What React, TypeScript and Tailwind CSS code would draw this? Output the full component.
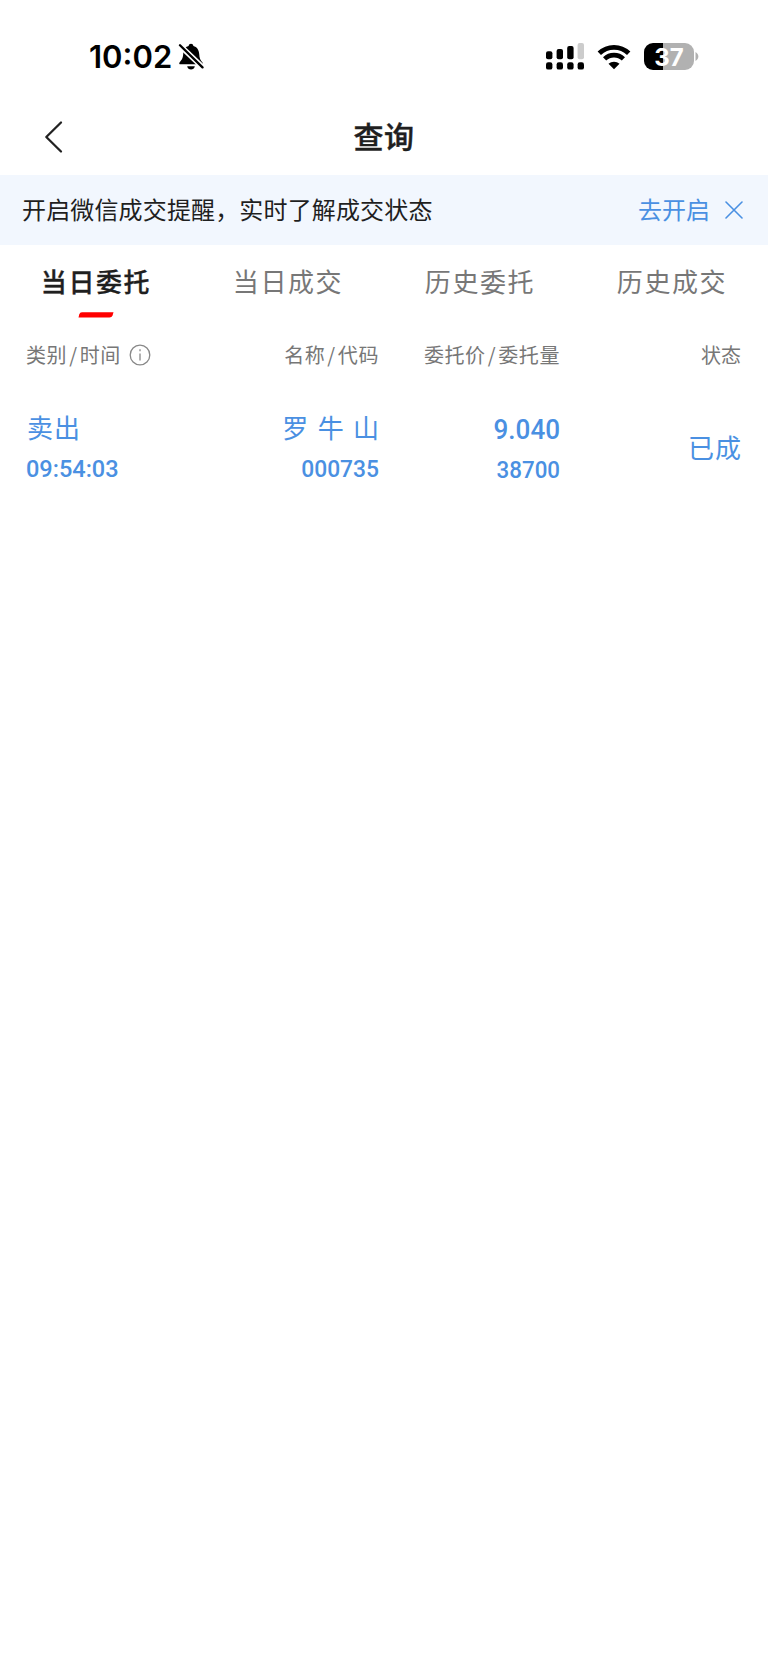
import clsx from "clsx"

const tabs = ["当日委托", "当日成交", "历史委托", "历史成交"]

const orders = [
  {
    side: "卖出",
    time: "09:54:03",
    name: "罗 牛 山",
    code: "000735",
    price: "9.040",
    amount: "38700",
    status: "已成",
  },
]

function BellOff() {
  return (
    <svg width="26" height="29" viewBox="0 0 26 29" className="shrink-0">
      <path d="M5.300 11C5.600 7.200 7.700 4.700 10.600 4C10.900 2.600 11.700 1.800 13 1.800s2.100.8 2.400 2.200c3.500.8 5.600 3.900 5.800 8 .2 4.300 1.200 6.100 3.100 8.200.8.900.5 2.100-.8 2.100H2.500c-1.300 0-1.600-1.200-.8-2.100 2.400-2.600 3.300-4.300 3.600-9.200z" />
      <path d="M9.200 24.200h7.600c-.4 2.200-1.900 3.300-3.800 3.300s-3.400-1.100-3.800-3.300z" />
      <path d="M.5 2.200L25.800 26.400" stroke="#fff" strokeWidth="5.400" />
      <path d="M2 3.200L24.500 25.400" stroke="#000" strokeWidth="2.300" strokeLinecap="round" />
    </svg>
  )
}

function Signal() {
  return (
    <svg width="38" height="27" viewBox="0 0 38 27">
      <rect x="0" y="8.300" width="6.400" height="8" rx="2" />
      <rect x="10.600" y="6" width="6.400" height="10.300" rx="2" />
      <rect x="21.200" y="3" width="6.400" height="13.300" rx="2" />
      <rect x="31.600" y="0" width="6.400" height="16.300" rx="2" fill="#ccc" />
      {[0, 10.6, 21.2, 31.6].map((x) => (
        <rect key={x} x={x} y="19.300" width="6.400" height="7.300" rx="2.200" />
      ))}
    </svg>
  )
}

function Wifi() {
  return (
    <svg width="34" height="26" viewBox="0 0 34 26">
      <path d="M2.300 9.300C10.500 1.300 23.500 1.300 31.700 9.300" fill="none" stroke="#000" strokeWidth="4.800" />
      <path d="M7.600 14.900C12.900 9.800 21.100 9.800 26.400 14.900" fill="none" stroke="#000" strokeWidth="4.600" />
      <path d="M17 25.300l-5.500-5.500c3.100-2.900 7.900-2.900 11 0z" />
    </svg>
  )
}

function Battery() {
  return (
    <div className="flex items-center">
      <div className="flex h-[27px] w-[50px] items-center justify-center rounded-[9px] bg-[linear-gradient(90deg,#000_37%,#b1b1b1_37%)]">
        <span className="pt-0.5 font-[Inter] text-[24px] leading-none font-bold text-white">37</span>
      </div>
      <svg width="5" height="9" viewBox="0 0 5 9">
        <path d="M1.500 0C5.300 2 5.300 7 1.500 9z" fill="#b1b1b1" />
      </svg>
    </div>
  )
}

function StatusBar() {
  return (
    <div className="flex h-[113px] items-center justify-between pr-[69px] pl-[89px]">
      <div className="flex items-center">
        <span className="font-[Inter] text-[31px] leading-none font-semibold text-black">10:02</span>
        <span className="ml-1.5">
          <BellOff />
        </span>
      </div>
      <div className="flex items-center">
        <Signal />
        <span className="mr-[13px] ml-[13px]">
          <Wifi />
        </span>
        <Battery />
      </div>
    </div>
  )
}

function ColumnTitle({ first, second }: { first: string; second: string }) {
  return (
    <span className="tracking-[0.6px]">
      {first}
      <span className="mx-0.5">/</span>
      {second}
    </span>
  )
}

export default function App() {
  return (
    <div className="min-h-[1669px] w-[768px] bg-white font-['Noto_Sans_CJK_SC',sans-serif] text-[#1f1f1f]">
      <StatusBar />

      <header className="grid h-[62px] grid-cols-[1fr_auto_1fr] items-start pt-px">
        <button className="ml-[44px] w-5 pt-[6px]">
          <svg width="20" height="34" viewBox="0 0 20 34" fill="none" stroke="#222" strokeWidth="2.300" strokeLinecap="round" strokeLinejoin="round">
            <path d="M17 2.500L2.300 17L17 31.500" />
          </svg>
        </button>
        <h1 className="text-[30px] leading-[42px] font-medium tracking-[0.5px] [-webkit-text-stroke:0.4px]">查询</h1>
      </header>

      <div className="flex h-[70px] items-center bg-[#f2f7fe] pr-[25px] pb-0.5 pl-[22px] text-[24px] leading-none">
        <p className="flex-1 tracking-[0.15px]">开启微信成交提醒，实时了解成交状态</p>
        <button className="text-[#4a90e2]">去开启</button>
        <svg width="18" height="18" viewBox="0 0 18 18" className="mt-0.5 ml-[15px]" stroke="#4a90e2" strokeWidth="1.600" strokeLinecap="round">
          <path d="M1 1l16 16M17 1L1 17" />
        </svg>
      </div>

      <nav className="grid h-[75px] grid-cols-4">
        {tabs.map((tab, i) => (
          <button
            key={tab}
            className={clsx(
              "flex flex-col items-center pt-4 text-[26px] leading-10 tracking-[1.600px]",
              i === 0 ? "font-medium [-webkit-text-stroke:0.3px]" : "text-[#777]"
            )}
          >
            {tab}
            {i === 0 && (
              <svg width="36" height="6" viewBox="0 0 36 6" className="mt-[11px]">
                <path d="M4 .3H35.500L34.600 3.200Q33.800 5.500 31.500 5.500H.5L1.200 2.500Q1.800.3 4 .3z" fill="#f00" />
              </svg>
            )}
          </button>
        ))}
      </nav>

      <div className="grid grid-cols-[140px_213px_181px_181px] px-[26px] pt-5 text-[20px] leading-[30px] text-[#777]">
        <div className="flex items-center whitespace-nowrap">
          <ColumnTitle first="类别" second="时间" />
          <svg width="22" height="22" viewBox="0 0 22 22" className="ml-2 shrink-0" fill="none" stroke="#888" strokeWidth="1.300">
            <circle cx="11" cy="11" r="9.800" />
            <path d="M11 9.500v7M11 5.300v1.900" />
          </svg>
        </div>
        <div className="text-right">
          <ColumnTitle first="名称" second="代码" />
        </div>
        <div className="text-right">
          <ColumnTitle first="委托价" second="委托量" />
        </div>
        <div className="text-right">状态</div>
      </div>

      {orders.map((order) => (
        <div
          key={order.time}
          className="grid grid-cols-[140px_213px_181px_181px] px-[26px] pt-[37px] text-[#4a90e2]"
        >
          <div>
            <div className="pl-px text-[26px] leading-10 tracking-[1px]">{order.side}</div>
            <div className="origin-left scale-x-98 pt-0.5 font-[Roboto] text-[24px] leading-10 font-medium">{order.time}</div>
          </div>
          <div className="text-right">
            <div className="-mr-px text-[26px] leading-10 tracking-[1px] [word-spacing:1.500px]">{order.name}</div>
            <div className="origin-right scale-x-95 pt-0.5 font-[Roboto] text-[24px] leading-10 font-medium">{order.code}</div>
          </div>
          <div className="origin-right scale-x-93 pt-[3px] text-right font-[Roboto] font-medium">
            <div className="text-[28px] leading-10">{order.price}</div>
            <div className="text-[24px] leading-10">{order.amount}</div>
          </div>
          <div className="-mr-px self-center pb-[3px] text-right text-[26px] leading-10 tracking-[1px]">{order.status}</div>
        </div>
      ))}
    </div>
  )
}
